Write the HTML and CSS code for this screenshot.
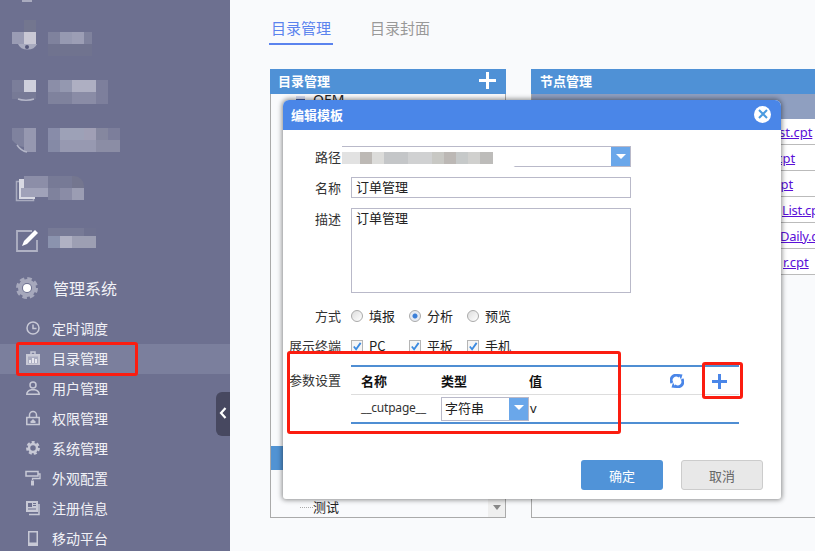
FILE: index.html
```html
<!DOCTYPE html>
<html lang="zh-CN">
<head>
  <meta charset="UTF-8" />
  <title>目录管理</title>
  <link rel="stylesheet" href="styles.css">
</head>
<body>
  <aside class="sidebar">
    <div class="blur-row">
      <svg width="36" height="48" viewBox="0 0 36 48"><rect x="12" width="12" height="12" fill="#73768f"/><rect y="12" width="12" height="12" fill="#9a9cb4"/><rect x="12" y="12" width="12" height="12" fill="#c9c8d4"/><path d="M6 24a10 8 0 0 0 19 0z" fill="#a9abbf"/><circle cx="15" cy="27" r="2" fill="#55587a"/></svg>
      <div class="smear smear-1"></div>
    </div>
    <div class="blur-row">
      <svg width="36" height="48" viewBox="0 0 36 48"><rect y="12" width="12" height="12" fill="#7b7e9a"/><rect x="12" y="12" width="12" height="12" fill="#cfd0dc"/><rect y="24" width="24" height="7" fill="#777a96"/><path d="M6 31a10 3 0 0 0 16 0" fill="none" stroke="#b4b6c8" stroke-width="1.5"/></svg>
      <div class="smear smear-2"></div>
    </div>
    <div class="blur-row">
      <svg width="36" height="48" viewBox="0 0 36 48"><path d="M0 12h12v19q-6 0-12-7z" fill="#7f829e"/><rect x="12" y="12" width="12" height="24" fill="#9698b0"/><path d="M5 29q4 6 10 7" fill="none" stroke="#b4b6c8" stroke-width="1.5"/></svg>
      <div class="smear smear-3"></div>
    </div>
    <div class="blur-row">
      <svg width="36" height="48" viewBox="0 0 36 48"><path d="M4.500 17.500h17v19h-17z" fill="none" stroke="#a9abbf" stroke-width="1.500"/><path d="M7 15h16v20H7z" fill="#d8d9e3"/><path d="M12 12h24v12H12z" fill="#8c8ea8"/><rect x="9" y="24" width="27" height="9" fill="#a0a2b9"/></svg>
      <div class="smear smear-4"></div>
    </div>
    <div class="blur-row">
      <svg width="36" height="48" viewBox="0 0 36 48"><path d="M20 19H5v20h20V28" fill="none" stroke="#b0b2c4" stroke-width="1.800"/><path d="M10 34l2-5 11-11 3 3-11 11z" fill="#fff"/></svg>
      <div class="smear smear-5"></div>
    </div>

    <div class="group-head">
      <svg class="icon-big" viewBox="0 0 22 22">
        <circle cx="11" cy="11" r="7" fill="none" stroke="#a6a8bc" stroke-width="4"/>
        <circle cx="11" cy="11" r="9.500" fill="none" stroke="#a6a8bc" stroke-width="3" stroke-dasharray="4.500 2.960"/>
        <circle cx="11" cy="11" r="4" fill="#fff"/>
      </svg>
      <span>管理系统</span>
    </div>

    <ul class="menu">
      <li>
        <svg viewBox="0 0 14 14"><circle cx="7" cy="7" r="6" fill="none" stroke="currentColor" stroke-width="1.500"/><path d="M7 3.500V7.500H10.500" fill="none" stroke="currentColor" stroke-width="1.500"/></svg>
        定时调度
      </li>
      <li class="active">
        <svg viewBox="0 0 14 14"><path d="M0 3h14v11H0z" fill="currentColor"/><path d="M5 1h4v3H5z" fill="none" stroke="currentColor" stroke-width="1.500"/><path d="M2 5.500h10v7H2z" fill="#a9abc0"/><path d="M3 12V9h2v3zM6 12V7h2v5zM9 12V8h2v4z" fill="#e6e6ee"/></svg>
        目录管理
      </li>
      <li>
        <svg viewBox="0 0 14 14"><circle cx="7" cy="4" r="3" fill="none" stroke="currentColor" stroke-width="1.500"/><path d="M.8 13.200c0-3 2.500-4 4.500-4.500h3.400c2 .5 4.500 1.500 4.500 4.500z" fill="none" stroke="currentColor" stroke-width="1.500"/></svg>
        用户管理
      </li>
      <li>
        <svg viewBox="0 0 14 14"><path d="M.8 6.500h12.400v7H.8z" fill="none" stroke="currentColor" stroke-width="1.500"/><path d="M3.500 6.500V4a3.500 3.500 0 0 1 7 0v2.500" fill="none" stroke="currentColor" stroke-width="1.500"/><path d="M7 8l2.500 2.500v1.500h-5v-1.500z" fill="currentColor"/></svg>
        权限管理
      </li>
      <li>
        <svg viewBox="0 0 14 14"><circle cx="7" cy="7" r="4" fill="none" stroke="currentColor" stroke-width="2.500"/><circle cx="7" cy="7" r="5.800" fill="none" stroke="currentColor" stroke-width="2.200" stroke-dasharray="3 2.060"/></svg>
        系统管理
      </li>
      <li>
        <svg viewBox="0 0 14 14"><path d="M0 .5h12v4.500H0z" fill="none" stroke="currentColor" stroke-width="1.500"/><path d="M12 3h2v4.500H6.500V9" fill="none" stroke="currentColor" stroke-width="1.300"/><path d="M5 9.500h3v5H5z" fill="currentColor"/></svg>
        外观配置
      </li>
      <li>
        <svg viewBox="0 0 14 14"><path d="M0 0h12v11H0z" fill="currentColor"/><path d="M2 2h4v4H2zM7 2h3v1H7zM7 4h3v1H7zM2 7.500h8v1H2z" fill="#6d7090"/><path d="M13 3v10.500H3" fill="none" stroke="currentColor" stroke-width="1.500"/></svg>
        注册信息
      </li>
      <li>
        <svg viewBox="0 0 14 14"><path d="M2 0h10v15H2z" fill="currentColor"/><path d="M3.500 1.500h7v10h-7z" fill="#6d7090"/></svg>
        移动平台
      </li>
    </ul>

    <button class="collapse">
      <svg width="8" height="12" viewBox="0 0 8 12"><path d="M6.500 1L2 6l4.500 5" fill="none" stroke="#fff" stroke-width="2.200"/></svg>
    </button>
  </aside>

  <main class="content">
    <nav class="tabs">
      <a class="tab tab-on">目录管理</a>
      <a class="tab">目录封面</a>
    </nav>

    <div class="panels">
      <section class="panel panel-tree">
        <header class="panel-head">
          <span>目录管理</span>
          <svg width="17" height="17" viewBox="0 0 17 17"><path d="M8.500 0v17M0 8.500h17" stroke="#fff" stroke-width="3"/></svg>
        </header>
        <div class="tree-body">
          <div class="tree-top"><span class="minus"></span>OEM</div>
          <div class="tree-selected"></div>
          <div class="tree-leaf"><span class="dots"></span>测试</div>
          <div class="scroll-down"></div>
        </div>
      </section>

      <section class="panel panel-nodes">
        <header class="panel-head">节点管理</header>
        <div class="nodes-head"></div>
        <div class="node"><a class="node-1">st.cpt</a></div>
        <div class="node"><a class="node-2">t.cpt</a></div>
        <div class="node"><a class="node-3">t.cpt</a></div>
        <div class="node"><a class="node-4">List.cpt</a></div>
        <div class="node"><a class="node-5">Daily.cpt</a></div>
        <div class="node"><a class="node-6">r.cpt</a></div>
      </section>
    </div>
  </main>

  <div class="modal">
    <header class="modal-head">
      <span>编辑模板</span>
      <span class="close">
        <svg width="10" height="10" viewBox="0 0 10 10"><path d="M1 1l8 8M9 1l-8 8" stroke="#4a9be0" stroke-width="2"/></svg>
      </span>
    </header>
    <div class="modal-body">
      <div class="form">
        <label class="lbl">路径</label>
        <div class="combo combo-path">
          <span class="combo-text"></span>
          <span class="combo-arrow"></span>
          <div class="path-blur"><div class="path-mosaic"></div></div>
        </div>

        <label class="lbl">名称</label>
        <div class="field">订单管理</div>

        <label class="lbl">描述</label>
        <div class="field field-area">订单管理</div>

        <label class="lbl lbl-check">方式</label>
        <div class="choices">
          <span class="choice"><i class="radio"></i>填报</span>
          <span class="choice"><i class="radio radio-on"></i>分析</span>
          <span class="choice"><i class="radio"></i>预览</span>
        </div>

        <label class="lbl lbl-check">展示终端</label>
        <div class="choices">
          <span class="choice"><i class="check"><svg width="11" height="11" viewBox="0 0 11 11"><path d="M2 5.500l2.500 3L9.500 1.500" fill="none" stroke="#3b8ae0" stroke-width="2"/></svg></i>PC</span>
          <span class="choice"><i class="check"><svg width="11" height="11" viewBox="0 0 11 11"><path d="M2 5.500l2.500 3L9.500 1.500" fill="none" stroke="#3b8ae0" stroke-width="2"/></svg></i>平板</span>
          <span class="choice"><i class="check"><svg width="11" height="11" viewBox="0 0 11 11"><path d="M2 5.500l2.500 3L9.500 1.500" fill="none" stroke="#3b8ae0" stroke-width="2"/></svg></i>手机</span>
        </div>

        <label class="lbl lbl-param">参数设置</label>
        <div class="params">
          <div class="params-head">
            <b class="col-name">名称</b>
            <b class="col-type">类型</b>
            <b class="col-val">值</b>
            <svg class="refresh" width="14" height="14" viewBox="0 0 14 14"><path d="M2 9A5 5 0 0 1 9.500 2.500M12 5A5 5 0 0 1 4.500 11.500" fill="none" stroke="#4a86e8" stroke-width="3"/><path d="M8 0l4.500 .5-1.500 5zM6 14l-4.500-.5 1.500-5z" fill="#4a86e8"/></svg>
            <svg class="add" width="15" height="15" viewBox="0 0 15 15"><path d="M7.500 0v15M0 7.500h15" stroke="#4a86e8" stroke-width="3"/></svg>
          </div>
          <div class="params-row">
            <span class="col-name">__cutpage__</span>
            <div class="combo combo-type">
              <span class="combo-text">字符串</span>
              <span class="combo-arrow"></span>
            </div>
            <span class="cell-val">v</span>
          </div>
        </div>
      </div>

      <div class="actions">
        <button class="btn btn-ok">确定</button>
        <button class="btn btn-cancel">取消</button>
      </div>
    </div>
  </div>

  <!-- red annotations on the screenshot -->
  <div class="mark mark-menu"></div>
  <div class="mark mark-params"></div>
  <div class="mark mark-add"></div>
</body>
</html>
```

FILE: styles.css
```css
* {
  margin: 0;
  padding: 0;
  box-sizing: border-box;
}

html, body {
  height: 551px;
  overflow: hidden;
}

body {
  display: flex;
  font-family: "Noto Sans", "Noto Sans CJK SC", sans-serif;
  font-size: 13px;
  background: #f9fafc;
  color: #222;
}

/* sidebar */
.sidebar {
  position: relative;
  flex: 0 0 230px;
  height: 551px;
  padding-top: 20px;
  background: #6d7090;
  color: #f2f2f7;
}

.sidebar::before {
  content: "";
  position: absolute;
  left: 22px;
  top: 0;
  width: 10px;
  height: 2px;
  background: #a9abbf;
}

.blur-row {
  display: flex;
  height: 48px;
  padding-left: 12px;
}

.smear {
  height: 24px;
  margin-top: 12px;
}

.smear-1 {
  width: 44px;
  background:
    linear-gradient(90deg, #7f829d 0 12px, #9699b1 12px 24px, #9c9eb5 24px 36px, #7f829d 36px) top / 100% 12px no-repeat,
    #70738f;
}

.smear-2 {
  width: 60px;
  background:
    linear-gradient(90deg, #8b8ea8 0 12px, #9498b0 12px 24px, #aeafc2 24px 48px, #7d7f9c 48px) top / 100% 12px no-repeat,
    linear-gradient(90deg, #7f829d 0 24px, #8a8ca6 24px 48px, #7d7f9c 48px);
}

.smear-3 {
  width: 72px;
  background:
    linear-gradient(90deg, #888ca9 0 12px, #9da1b7 12px 36px, #a09fb5 36px 48px, #85879f 48px 60px, #7c7e9b 60px) top / 100% 12px no-repeat,
    linear-gradient(90deg, #858aa6 0 12px, #9799b1 12px 48px, #8b8da5 48px);
}

.smear-4 {
  width: 36px;
  background:
    linear-gradient(90deg, #777a96 0 24px, #74768f 24px) top / 100% 12px no-repeat,
    linear-gradient(90deg, #7f829d 0 12px, #8a8ca6 12px 24px, #9b9db3 24px);
  border-top-right-radius: 10px;
}

.smear-5 {
  width: 48px;
  height: 20px;
  margin-top: 16px;
  background:
    linear-gradient(90deg, #777a96 0 36px, #6f7290 36px) top / 100% 8px no-repeat,
    linear-gradient(90deg, #8b93ae 0 12px, #b0b1c3 12px 24px, #9d9fb3 24px);
}

.group-head {
  display: flex;
  align-items: center;
  height: 54px;
  padding: 2px 0 0 16px;
  font-size: 16px;
}

.icon-big {
  width: 22px;
  height: 22px;
  margin-right: 15px;
}

.menu {
  list-style: none;
}

.menu li {
  display: flex;
  align-items: center;
  height: 30px;
  padding: 0 0 2px 26px;
  font-size: 14px;
}

.menu li svg {
  flex: 0 0 14px;
  width: 14px;
  height: 14px;
  margin-right: 12px;
  color: #c8c9d6;
  overflow: visible;
}

.menu li.active {
  background: #7b7f9d;
}

.collapse {
  position: absolute;
  top: 392px;
  right: 0;
  width: 14px;
  height: 44px;
  border: none;
  border-radius: 6px 0 0 6px;
  background: #474860;
}

/* main area */
.content {
  flex: 1;
  min-width: 0;
  overflow: hidden;
  padding: 18px 0 0 40px;
}

.tabs {
  display: flex;
  gap: 35px;
  height: 51px;
  margin-left: -1px;
}

.tab {
  height: 27px;
  padding: 0 2px;
  font-size: 15px;
  line-height: 20px;
  color: #999;
}

.tab-on {
  color: #5b83ee;
  border-bottom: 2px solid #5b83ee;
}

.panels {
  display: flex;
  gap: 25px;
  height: 449px;
}

.panel {
  display: flex;
  flex-direction: column;
  border: 1px solid #aaa;
  border-top: none;
}

.panel-tree {
  flex: 0 0 236px;
}

.panel-nodes {
  flex: 0 0 320px;
}

.panel-head {
  display: flex;
  align-items: center;
  justify-content: space-between;
  flex: 0 0 25px;
  margin: 0 -1px;
  padding: 0 10px 3px 8px;
  background: #4f91d6;
  color: #fff;
  font-size: 13px;
  font-weight: bold;
}

.panel-nodes .panel-head {
  padding-left: 9px;
}

.tree-body {
  position: relative;
  display: flex;
  flex-direction: column;
  flex: 1;
}

.tree-top {
  display: flex;
  align-items: center;
  height: 16px;
  margin-top: -2px;
  padding-left: 25px;
  font-size: 14px;
  line-height: 16px;
}

.minus {
  width: 9px;
  height: 9px;
  margin-right: 8px;
  background: linear-gradient(#d5dcf0 0 3px, #3b5ba8 3px 5px, #d5dcf0 5px);
}

.tree-selected {
  height: 24px;
  margin-top: 338px;
  background: #5193d3;
}

.tree-leaf {
  display: flex;
  align-items: center;
  height: 20px;
  margin-top: 27px;
  padding-left: 29px;
  line-height: 20px;
}

.dots {
  width: 13px;
  border-top: 1px dotted #aaa;
}

.scroll-down {
  position: absolute;
  right: 0;
  bottom: 0;
  width: 17px;
  height: 19px;
  background: #efefef;
}

.scroll-down::after {
  content: "";
  position: absolute;
  left: 5px;
  top: 7px;
  border: 4px solid transparent;
  border-top: 5px solid #888;
}

.nodes-head {
  flex: 0 0 25px;
  margin-right: -1px;
  background: #8f9fc0;
}

.node {
  flex: 0 0 26px;
  padding-top: 1px;
  border-bottom: 1px solid #bbb;
  background: #fff;
  line-height: 24px;
  white-space: nowrap;
}

.node a {
  color: #5a10d8;
  text-decoration: underline;
}

.node-1 { margin-left: 247px; }
.node-2 { margin-left: 236px; }
.node-3 { margin-left: 234px; }
.node-4 { margin-left: 250px; letter-spacing: -0.3px; }
.node-5 { margin-left: 248px; letter-spacing: -0.3px; }
.node-6 { margin-left: 251px; }

/* dialog */
.modal {
  position: absolute;
  left: 283px;
  top: 100px;
  width: 498px;
  height: 399px;
  border-radius: 6px 6px 3px 3px;
  background: #fff;
  box-shadow: 0 0 5px 1px rgba(0, 0, 0, 0.45);
}

.modal-head {
  display: flex;
  align-items: center;
  justify-content: space-between;
  height: 30px;
  padding: 0 10px 2px 8px;
  border-radius: 6px 6px 0 0;
  background: #4a86e8;
  color: #fff;
  font-weight: bold;
}

.close {
  display: flex;
  align-items: center;
  justify-content: center;
  width: 17px;
  height: 17px;
  border-radius: 50%;
  background: #fff;
}

.modal-body {
  padding-top: 16px;
}

.form {
  display: grid;
  grid-template-columns: 58px 388px;
  grid-template-rows: 21px 21px 85px 23px 20px 59px;
  column-gap: 10px;
  row-gap: 10px;
  font-family: "Noto Sans CJK SC", "Noto Sans", sans-serif;
}

.lbl {
  justify-self: end;
  line-height: 21px;
  color: #333;
}

.lbl-check {
  align-self: end;
  line-height: 20px;
}

.lbl-param {
  line-height: 28px;
}

.field,
.combo {
  position: relative;
  display: flex;
  width: 280px;
  border: 1px solid #b9b9c9;
  line-height: 18px;
  padding-left: 4px;
}

.field-area {
  height: 85px;
  line-height: 17px;
}

.combo {
  padding-left: 0;
}

.combo-text {
  flex: 1;
  padding-left: 3px;
}

.combo-arrow {
  position: relative;
  flex: 0 0 19px;
  background: #6aa7ea;
}

.combo-arrow::after {
  content: "";
  position: absolute;
  left: 5px;
  top: 7px;
  border: 4px solid transparent;
  border-top: 5px solid #fff;
  border-left-width: 5px;
  border-right-width: 5px;
}

.path-blur {
  position: absolute;
  left: -10px;
  top: -1px;
  width: 176px;
  height: 23px;
  padding-top: 5px;
  border-top: 1px solid #b9b9c9;
  border-radius: 0 0 10px 10px;
  background: #fff;
}

.path-mosaic {
  width: 151px;
  height: 12px;
  background: linear-gradient(90deg, #e2e2e2 0 18px, #bdb9b5 18px 30px, #dcdcda 30px 42px, #c4c6c8 42px 66px, #d0d1d2 66px 90px, #c8c8c4 90px 102px, #bcb8b5 102px 114px, #c6c9c9 114px 126px, #d0d0ce 126px 138px, #bdbcba 138px);
}

.choices {
  display: flex;
  align-items: flex-end;
}

.choice {
  display: flex;
  align-items: center;
  width: 58px;
  line-height: 20px;
}

.radio,
.check {
  flex: 0 0 12px;
  width: 12px;
  height: 12px;
  margin-right: 6px;
}

.radio {
  border: 1px solid #aaa;
  border-radius: 50%;
  background: linear-gradient(135deg, #ddd, #fff);
}

.radio-on {
  background: radial-gradient(circle, #3b7fd8 0 2px, #e6eaf2 3px);
}

.check {
  display: flex;
  align-items: center;
  justify-content: center;
  border: 1px solid #b5b5b5;
  background: #f5f5f5;
}

.params {
  height: 59px;
  margin-top: -1px;
  border-top: 2px solid #4f8ed3;
  border-bottom: 2px solid #4f8ed3;
}

.params-head {
  position: relative;
  display: flex;
  height: 28px;
  border-bottom: 1px solid #ddd;
  line-height: 28px;
  color: #111;
}

.params-row {
  display: flex;
  align-items: center;
  height: 27px;
}

.col-name {
  flex: 0 0 90px;
  padding-left: 10px;
}

.col-type {
  flex: 0 0 88px;
}

.params-row .col-name {
  margin-top: -2px;
  font-family: "Noto Sans", sans-serif;
  font-size: 12px;
  letter-spacing: -0.2px;
  color: #333;
}

.combo-type {
  flex: 0 0 88px;
  width: 88px;
  height: 24px;
  line-height: 19px;
}

.cell-val {
  margin-top: -2px;
  padding-left: 1px;
  font-family: "Noto Sans", sans-serif;
}

.refresh {
  position: absolute;
  left: 319px;
  top: 7px;
}

.add {
  position: absolute;
  left: 361px;
  top: 7px;
}

.actions {
  display: flex;
  justify-content: flex-end;
  gap: 18px;
  margin-top: 35px;
  padding-right: 18px;
}

.btn {
  width: 82px;
  height: 30px;
  border-radius: 3px;
  font-family: "Noto Sans CJK SC", sans-serif;
  font-size: 13px;
}

.btn-ok {
  border: none;
  background: #5093d8;
  color: #fff;
}

.btn-cancel {
  border: 1px solid #ccc;
  background: #e8e8e8;
  color: #666;
}

/* annotations */
.mark {
  position: absolute;
  border: 3px solid #fb1d10;
  border-radius: 3px;
}

.mark-menu {
  left: 16px;
  top: 342px;
  width: 122px;
  height: 34px;
}

.mark-params {
  left: 287px;
  top: 351px;
  width: 334px;
  height: 83px;
}

.mark-add {
  left: 702px;
  top: 362px;
  width: 41px;
  height: 37px;
}
```
